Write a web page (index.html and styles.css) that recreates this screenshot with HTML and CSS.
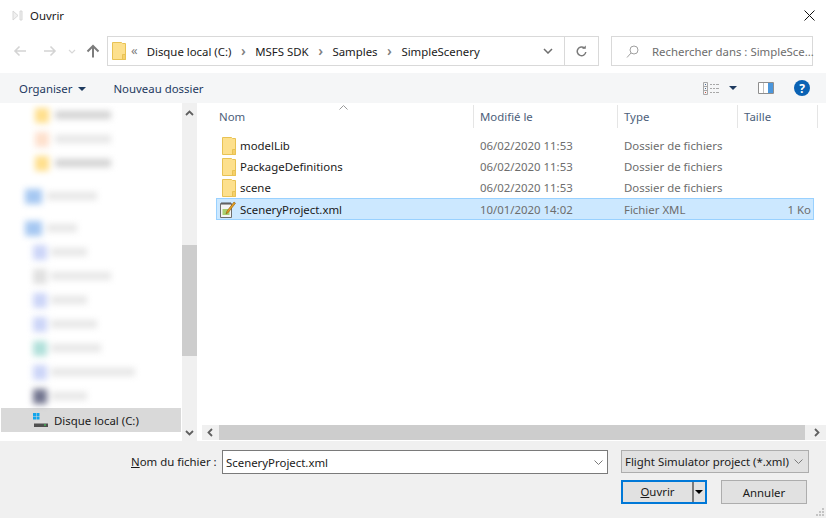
FILE: index.html
```html
<!DOCTYPE html>
<html lang="fr">
<head>
  <meta charset="UTF-8">
  <title>Ouvrir</title>
  <link rel="stylesheet" href="styles.css">
</head>
<body>

<svg class="defs" width="0" height="0">
  <symbol id="folder" viewBox="0 0 14 18">
    <path d="M.5.5h9l1 1h3v16H.5z" fill="#fde08d" stroke="#e8c254"/>
    <path d="M10.5 17.5v-5h3v5z" fill="#f6d06a" stroke="#e8c254"/>
  </symbol>
</svg>

<div class="dialog">

  <div class="titlebar">
    <svg class="app-icon" width="11" height="11" viewBox="0 0 11 11"><path d="M1 1l5 4.500L1 10zM8 1h2v9H8z" fill="#f0f0f0" stroke="#d8d8d8"/></svg>
    <span class="title">Ouvrir</span>
    <svg class="close" width="11" height="11" viewBox="0 0 11 11"><path d="M.5.500l10 10M10.500.500l-10 10" stroke="#111" fill="none"/></svg>
  </div>

  <div class="navbar">
    <div class="nav-btns">
      <svg width="14" height="12" viewBox="0 0 14 12"><path d="M13 6H2M6.500 1.500L2 6l4.500 4.500" fill="none" stroke="#d4d4d4" stroke-width="1.600"/></svg>
      <svg width="14" height="12" viewBox="0 0 14 12"><path d="M1 6h11M7.500 1.500L12 6l-4.500 4.500" fill="none" stroke="#d4d4d4" stroke-width="1.600"/></svg>
      <svg width="8" height="5" viewBox="0 0 8 5"><path d="M1 1l3 3 3-3" fill="none" stroke="#d8d8d8" stroke-width="1.200"/></svg>
      <svg width="14" height="14" viewBox="0 0 14 14"><path d="M7 13.500V2M1.500 7.500L7 2l5.500 5.500" fill="none" stroke="#7c7c7c" stroke-width="2"/></svg>
    </div>
    <div class="address">
      <svg class="addr-folder" width="14" height="18"><use href="#folder"/></svg>
      <span class="crumb-more">«</span>
      <span class="crumb">Disque local (C:)</span><span class="sep">›</span>
      <span class="crumb">MSFS SDK</span><span class="sep">›</span>
      <span class="crumb">Samples</span><span class="sep">›</span>
      <span class="crumb">SimpleScenery</span>
      <svg class="addr-drop" width="10" height="6" viewBox="0 0 10 6"><path d="M1 1l4 4 4-4" fill="none" stroke="#6e6e6e" stroke-width="1.500"/></svg>
      <div class="refresh">
        <svg width="11" height="12" viewBox="0 0 11 12"><path d="M8.500 3.200A4.300 4.300 0 1 0 9.800 7" fill="none" stroke="#7a7a7a" stroke-width="1.500"/><path d="M6 3.800h3.800V.5z" fill="#7a7a7a"/></svg>
      </div>
    </div>
    <div class="search">
      <svg width="13" height="13" viewBox="0 0 13 13"><circle cx="8" cy="5" r="4" fill="none" stroke="#a0a0a0"/><path d="M5 8l-4 4.500" stroke="#a0a0a0" fill="none"/></svg>
      <span>Rechercher dans : SimpleSce...</span>
    </div>
  </div>

  <div class="toolbar">
    <span class="tool">Organiser<i class="caret"></i></span>
    <span class="tool new-folder">Nouveau dossier</span>
    <div class="tool-icons">
      <svg width="16" height="13" viewBox="0 0 16 13"><path d="M.5.500h4v12h-4zM.5 4.500h4M.5 8.500h4" fill="none" stroke="#a8a8a8"/><path d="M7 2.500h2M10 2.500h2M13 2.500h3M7 6.500h2M10 6.500h2M13 6.500h3M7 10.500h2M10 10.500h2M13 10.500h3" stroke="#a8a8a8"/><path d="M2 2h1v1H2zM2 6h1v1H2z" fill="#4c6a92"/><path d="M2 10h1v1H2z" fill="#d04a3a"/></svg>
      <i class="caret"></i>
      <svg class="pane-icon" width="16" height="12" viewBox="0 0 16 12"><path d="M.5.500h15v11H.5z" fill="#fff" stroke="#8e8e8e"/><path d="M10 1h5v10h-5z" fill="#4a96dc"/><path d="M5.500 1v10" stroke="#c0c0c0"/></svg>
      <svg width="16" height="16" viewBox="0 0 16 16"><circle cx="8" cy="8" r="8" fill="#0a62b4"/><text x="8" y="12.500" class="help-mark">?</text></svg>
    </div>
  </div>

  <div class="main">
    <div class="nav-pane">
      <div class="tree">
        <div class="blur-row indent-2"><i class="ic yellow"></i><b class="w56 dark"></b></div>
        <div class="blur-row indent-2"><i class="ic peach"></i><b class="w56"></b></div>
        <div class="blur-row indent-2"><i class="ic yellow"></i><b class="w56 dark"></b></div>
        <div class="blur-row indent-1 gap-9"><i class="ic blue"></i><b class="w50"></b></div>
        <div class="blur-row indent-1 gap-8"><i class="ic blue"></i><b class="w30"></b></div>
        <div class="blur-row indent-3"><i class="ic violet"></i><b class="w36"></b></div>
        <div class="blur-row indent-3"><i class="ic grey"></i><b class="w60"></b></div>
        <div class="blur-row indent-3"><i class="ic violet"></i><b class="w36"></b></div>
        <div class="blur-row indent-3"><i class="ic violet"></i><b class="w46"></b></div>
        <div class="blur-row indent-3"><i class="ic teal"></i><b class="w50"></b></div>
        <div class="blur-row indent-3"><i class="ic violet"></i><b class="w84"></b></div>
        <div class="blur-row indent-3"><i class="ic slate"></i><b class="w36"></b></div>
        <div class="tree-row selected">
          <svg width="15" height="14" viewBox="0 0 15 14"><path d="M0 0h3v3H0zM3.500 0h3v3h-3zM0 3.500h3v3H0zM3.500 3.500h3v3h-3z" fill="#12a5ec"/><path d="M2.500 7.500h10l2 3H1z" fill="#dcdcdc"/><path d="M1 10.500h14V14H1z" fill="#505050"/><path d="M11 11.500h2v1h-2z" fill="#3fe05a"/></svg>
          <span>Disque local (C:)</span>
        </div>
        <div class="tree-row">
          <span class="no-icon">FastDATA (D:)</span>
        </div>
      </div>
      <div class="vscroll">
        <svg class="arrow" width="9" height="6" viewBox="0 0 9 6"><path d="M1 5l3.500-3.500L8 5" fill="none" stroke="#606060" stroke-width="1.800"/></svg>
        <div class="vthumb"></div>
        <svg class="arrow down" width="9" height="6" viewBox="0 0 9 6"><path d="M1 1l3.500 3.500L8 1" fill="none" stroke="#606060" stroke-width="1.800"/></svg>
      </div>
    </div>

    <div class="list-pane">
      <div class="list-head">
        <span class="col">Nom<svg class="sort" width="9" height="5" viewBox="0 0 9 5"><path d="M.5 4.500l4-4 4 4" fill="none" stroke="#9a9a9a"/></svg></span>
        <span class="col">Modifié le</span>
        <span class="col">Type</span>
        <span class="col">Taille</span>
      </div>
      <div class="rows">
        <div class="row">
          <span class="name"><svg width="14" height="18"><use href="#folder"/></svg>modelLib</span>
          <span>06/02/2020 11:53</span><span>Dossier de fichiers</span><span></span>
        </div>
        <div class="row">
          <span class="name"><svg width="14" height="18"><use href="#folder"/></svg>PackageDefinitions</span>
          <span>06/02/2020 11:53</span><span>Dossier de fichiers</span><span></span>
        </div>
        <div class="row">
          <span class="name"><svg width="14" height="18"><use href="#folder"/></svg>scene</span>
          <span>06/02/2020 11:53</span><span>Dossier de fichiers</span><span></span>
        </div>
        <div class="row current">
          <span class="name">
            <svg class="xml-icon" width="16" height="17" viewBox="0 0 16 17"><path d="M.5 2.500h11v14H.5z" fill="#f4f4f4" stroke="#6e6e6e"/><path d="M2.500 8h7v6h-7z" fill="#a8d070"/><path d="M2 1v3M4 1v3M6 1v3M8 1v3M10 1v3" stroke="#555"/><path d="M6 13l1-3 7-9 1.500 1.200-7 9z" fill="#e8a020" stroke="#8a5a10" stroke-width=".6"/></svg>
            SceneryProject.xml
          </span>
          <span>10/01/2020 14:02</span><span>Fichier XML</span><span class="size">1 Ko</span>
        </div>
      </div>
      <div class="hscroll">
        <svg width="6" height="9" viewBox="0 0 6 9"><path d="M5 1L1.500 4.500 5 8" fill="none" stroke="#606060" stroke-width="1.800"/></svg>
        <div class="hthumb"></div>
        <svg width="6" height="9" viewBox="0 0 6 9"><path d="M1 1l3.500 3.500L1 8" fill="none" stroke="#606060" stroke-width="1.800"/></svg>
      </div>
    </div>
  </div>

  <div class="footer">
    <div class="file-line">
      <label class="file-label" for="file"><u>N</u>om du fichier :</label>
      <div class="file-input">
        <input id="file" type="text" value="SceneryProject.xml">
        <svg width="9" height="5" viewBox="0 0 9 5"><path d="M.5.500l4 4 4-4" fill="none" stroke="#7a7a7a"/></svg>
      </div>
      <div class="file-type">
        <span>Flight Simulator project (*.xml)</span>
        <svg width="9" height="5" viewBox="0 0 9 5"><path d="M.5.500l4 4 4-4" fill="none" stroke="#7a7a7a"/></svg>
      </div>
    </div>
    <div class="actions">
      <button class="btn primary"><span class="btn-label"><u>O</u>uvrir</span><span class="split"><i class="caret black"></i></span></button>
      <button class="btn">Annuler</button>
    </div>
    <svg class="grip" width="9" height="9" viewBox="0 0 9 9"><path d="M7 1h2v2H7zM4 4h2v2H4zM7 4h2v2H7zM1 7h2v2H1zM4 7h2v2H4zM7 7h2v2H7z" fill="#c4c4c4"/></svg>
  </div>

</div>

</body>
</html>
```

FILE: styles.css
```css
* { margin: 0; padding: 0; box-sizing: border-box; }
body {
  font-family: 'Noto Sans', 'Open Sans', sans-serif;
  font-size: 11.4px;
  background: #fff;
  color: #1a1a1a;
  overflow: hidden;
}
svg { display: block; flex: none; }
.defs { position: absolute; }
.dialog {
  width: 826px;
  height: 518px;
  display: flex;
  flex-direction: column;
}

/* title */
.titlebar {
  height: 36px;
  padding: 0 11px 6px 12px;
  display: flex;
  align-items: center;
}
.title { margin-left: 7px; }
.close { margin-left: auto; }

/* back/forward + address + search */
.navbar {
  height: 30px;
  display: flex;
  align-items: center;
}
.nav-btns {
  width: 107px;
  padding-left: 13px;
  display: flex;
  align-items: center;
}
.nav-btns svg:nth-child(2) { margin-left: 16px; }
.nav-btns svg:nth-child(3) { margin-left: 11px; }
.nav-btns svg:nth-child(4) { margin-left: 10px; }
.address {
  width: 492px;
  height: 30px;
  border: 1px solid #d9d9d9;
  padding-left: 4px;
  display: flex;
  align-items: center;
}
.crumb-more { margin: 0 9px 3px 5px; color: #808080; font-size: 13px; }
.sep { margin: 0 9.5px; color: #808080; font-size: 14px; font-weight: 600; line-height: 1; }
.addr-drop { margin-left: auto; margin-right: 11px; }
.refresh {
  width: 34px;
  height: 100%;
  border-left: 1px solid #d9d9d9;
  display: flex;
  align-items: center;
  justify-content: center;
}
.search {
  width: 202px;
  height: 30px;
  margin-left: 12px;
  border: 1px solid #d9d9d9;
  padding-left: 14px;
  display: flex;
  align-items: center;
  gap: 13px;
  color: #6d6d6d;
  white-space: nowrap;
}

/* toolbar */
.toolbar {
  height: 30px;
  margin-top: 7px;
  background: #f5f6f7;
  padding: 0 16px 0 19px;
  display: flex;
  align-items: center;
  color: #1e3a5f;
}
.new-folder { margin-left: 27px; }
.caret {
  display: inline-block;
  border: 4px solid transparent;
  border-top: 4px solid #1e3a5f;
  border-bottom: 0;
  margin-left: 6px;
  vertical-align: 2px;
}
.tool-icons {
  margin-left: auto;
  display: flex;
  align-items: center;
}
.tool-icons .caret { margin-left: 10px; }
.pane-icon { margin: 0 20px 0 21px; }
.help-mark {
  fill: #fff;
  font-size: 12px;
  font-weight: 700;
  text-anchor: middle;
}

/* main area */
.main {
  height: 338px;
  display: flex;
}
.nav-pane {
  width: 197px;
  display: flex;
}
.tree {
  width: 182px;
  overflow: hidden;
}
.blur-row {
  height: 24px;
  display: flex;
  align-items: center;
  filter: blur(3px);
}
.indent-1 { padding-left: 25px; gap: 5px; }
.indent-2 { padding-left: 35px; gap: 6px; }
.indent-3 { padding-left: 33px; gap: 4px; }
.gap-9 { margin-top: 9px; }
.gap-8 { margin-top: 8px; }
.ic { width: 14px; height: 15px; display: block; }
.indent-1 .ic { width: 17px; }
.blur-row b { height: 8px; background: #e6e6e6; display: block; }
.blur-row b.dark { background: #d2d2d2; }
.yellow { background: #ffdf8c; }
.peach { background: #fee0cc; }
.blue { background: #a6c8f2; }
.violet { background: #ccd5f8; }
.grey { background: #e0e0e0; }
.teal { background: #b0e0da; }
.slate { background: #72758f; }
.w30 { width: 30px; }
.w36 { width: 36px; }
.w46 { width: 46px; }
.w50 { width: 50px; }
.w56 { width: 56px; }
.w60 { width: 60px; }
.w84 { width: 84px; }
.tree-row {
  height: 24px;
  padding-left: 33px;
  display: flex;
  align-items: center;
  gap: 6px;
}
.tree-row.selected { background: #d9d9d9; margin-left: 1px; margin-right: 1px; padding-left: 32px; }
.no-icon { margin-left: 21px; }
.vscroll {
  width: 15px;
  background: #f0f0f0;
  display: flex;
  flex-direction: column;
  align-items: center;
  position: relative;
  padding-top: 7px;
}
.vthumb {
  width: 15px;
  height: 111px;
  background: #cdcdcd;
  margin-top: 129px;
}
.vscroll .down { margin-top: auto; margin-bottom: 5px; }

/* file list */
.list-pane {
  flex: 1;
  margin-left: 4px;
  display: flex;
  flex-direction: column;
  min-width: 0;
}
.list-head {
  height: 25px;
  padding-top: 2px;
  display: grid;
  grid-template-columns: 273px 144px 120px 80px;
  color: #4c607a;
}
.col {
  padding-left: 6px;
  border-right: 1px solid #e5e5e5;
  display: flex;
  align-items: center;
  position: relative;
}
.col:first-child { padding-left: 18px; }
.sort { position: absolute; top: 0; left: 138px; }
.rows {
  flex: 1;
  padding: 7px 12px 0 15px;
}
.row {
  height: 21px;
  display: grid;
  grid-template-columns: 257px 144px 120px 77px;
  align-items: center;
  color: #6d6d6d;
  border: 1px solid transparent;
}
.row > span { padding-left: 6px; }
.name {
  display: flex;
  align-items: center;
  gap: 4px;
  color: #1a1a1a;
}
.row > .name { padding-left: 5px; }
.xml-icon { margin: 0 0 0 -2px; }
.row.current {
  background: #cce8ff;
  border-color: #99d1ff;
  height: 22px;
}
.row .size { text-align: right; padding-right: 4px; }
.hscroll {
  height: 15px;
  margin: 0 0 1px 1px;
  background: #f0f0f0;
  display: flex;
  align-items: center;
  padding: 0 5px;
}
.hthumb {
  width: 586px;
  height: 15px;
  background: #cdcdcd;
  margin: 0 9px 0 6px;
}

/* bottom */
.footer {
  flex: 1;
  background: #f0f0f0;
  position: relative;
  padding-top: 9px;
}
.file-line {
  display: flex;
  align-items: flex-start;
  height: 24px;
}
.file-label { margin-left: 131px; width: 91px; line-height: 24px; white-space: nowrap; }
.file-input {
  width: 386px;
  height: 24px;
  border: 1px solid #7a7a7a;
  background: #fff;
  padding: 0 4px 0 3px;
  display: flex;
  align-items: center;
}
.file-input input {
  flex: 1;
  min-width: 0;
  border: 0;
  outline: 0;
  font: inherit;
  color: #1a1a1a;
  background: transparent;
}
.file-type {
  width: 188px;
  height: 23px;
  margin-left: 13px;
  border: 1px solid #adadad;
  background: #e1e1e1;
  padding: 0 5px 0 3px;
  display: flex;
  align-items: center;
  justify-content: space-between;
  white-space: nowrap;
}
.actions {
  display: flex;
  gap: 14px;
  margin: 6px 0 0 621px;
}
.btn {
  width: 86px;
  height: 24px;
  border: 1px solid #adadad;
  background: #e1e1e1;
  font: inherit;
  color: #1a1a1a;
}
.btn.primary {
  border: 2px solid #0078d7;
  display: flex;
  align-items: stretch;
}
.btn-label {
  flex: 1;
  line-height: 20px;
}
.split {
  width: 13px;
  border-left: 2px solid #7a7a7a;
  display: flex;
  align-items: center;
}
.caret.black { border-top-color: #000; margin-left: 1px; vertical-align: 0; }
.grip { position: absolute; right: 2px; bottom: 2px; }
```
